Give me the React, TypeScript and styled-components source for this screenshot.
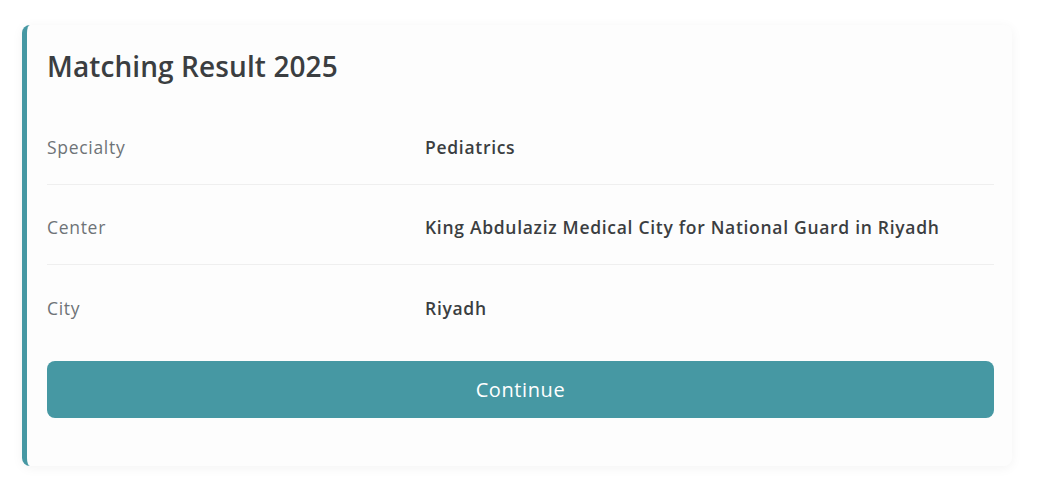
import React from "react";
import styled, { createGlobalStyle } from "styled-components";

const GlobalStyle = createGlobalStyle`
    body {
        margin: 0;
        background: #ffffff;
        font-family: "Open Sans", "Liberation Sans", sans-serif;
    }
`;

const Page = styled.div`
    width: 1040px;
    height: 488px;
    padding: 25px 28px 22px 22px;
    box-sizing: border-box;
`;

const Card = styled.div`
    display: flex;
    flex-direction: column;
    height: 100%;
    box-sizing: border-box;
    padding: 24px 18px 48px 20px;

    background-color: #fdfdfd;
    border-left: 5px solid #4698a3;
    border-radius: 8px;
    box-shadow: 0 2px 12px rgba(0, 0, 0, 0.05);
`;

const Title = styled.h1`
    margin: 0;
    height: 57px;
    font-size: 28px;
    line-height: 34px;
    font-weight: 600;
    letter-spacing: 0.1px;
    color: #3b3e41;
`;

const InfoList = styled.div`
    display: flex;
    flex-direction: column;
`;

const InfoRow = styled.div<{ $last?: boolean }>`
    display: grid;
    grid-template-columns: 378px 1fr;
    align-items: center;
    height: 80px;
    padding-top: 5px;
    box-sizing: border-box;
    border-bottom: ${(p) => (p.$last ? "none" : "1px solid #efefef")};
    font-size: 17.5px;
    letter-spacing: 0.7px;
`;

const Label = styled.span`
    color: #6e7377;
`;

const Value = styled.span`
    color: #3b3e41;
    font-weight: 600;
`;

const ContinueButton = styled.button`
    margin-top: 16px;
    height: 57px;
    border: none;
    border-radius: 8px;
    background-color: #4698a3;
    color: #ffffff;
    font-family: inherit;
    font-size: 20px;
    letter-spacing: 0.6px;
    cursor: pointer;
`;

const rows = [
    { label: "Specialty", value: "Pediatrics" },
    { label: "Center", value: "King Abdulaziz Medical City for National Guard in Riyadh" },
    { label: "City", value: "Riyadh" },
];

export default function App() {
    return (
        <>
            <GlobalStyle />
            <Page>
                <Card>
                    <Title>Matching Result 2025</Title>
                    <InfoList>
                        {rows.map((row, i) => (
                            <InfoRow key={row.label} $last={i === rows.length - 1}>
                                <Label>{row.label}</Label>
                                <Value>{row.value}</Value>
                            </InfoRow>
                        ))}
                    </InfoList>
                    <ContinueButton>Continue</ContinueButton>
                </Card>
            </Page>
        </>
    );
}
